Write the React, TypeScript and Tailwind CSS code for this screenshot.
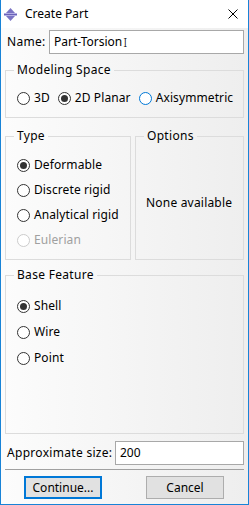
import React, { useState } from "react";

const font = { fontFamily: '"Noto Sans", "Liberation Sans", sans-serif' };

type RadioProps = {
  label: string;
  checked?: boolean;
  disabled?: boolean;
  focus?: boolean;
  onClick?: () => void;
};

const Radio = ({ label, checked, disabled, focus, onClick }: RadioProps) => (
  <button
    onClick={onClick}
    disabled={disabled}
    className="flex items-center gap-[4px] h-[16px] bg-transparent p-0 cursor-default"
  >
    <span
      className={`w-[13px] h-[13px] rounded-full border bg-white flex items-center justify-center shrink-0 ${
        disabled ? "border-[#cccccc]" : focus ? "border-[#0078d7]" : "border-[#333333]"
      }`}
    >
      {checked && <span className="w-[7px] h-[7px] rounded-full bg-[#333333]" />}
    </span>
    <span className={`text-[12px] leading-[16px] tracking-[0.1px] ${disabled ? "text-[#a0a0a0]" : "text-black"}`}>
      {label}
    </span>
  </button>
);

// Win-style group box
const Group = ({
  title,
  className,
  children,
}: {
  title: string;
  className?: string;
  children: React.ReactNode;
}) => (
  <fieldset className={`border border-[#dcdcdc] m-0 p-0 min-w-0 ${className ?? ""}`}>
    <legend className="ml-[8px] px-[3px] text-[12px] leading-[16px] tracking-[0.3px] text-black">{title}</legend>
    {children}
  </fieldset>
);

export default function App() {
  const [space, setSpace] = useState("2D Planar");
  const [type, setType] = useState("Deformable");
  const [feature, setFeature] = useState("Shell");

  return (
    <div
      style={font}
      className="w-[249px] h-[505px] border border-t-0 border-[#1883d7] flex flex-col bg-gradient-to-r from-[#fcfcfc] to-[#eeeeee] select-none"
    >
      {/* Title bar */}
      <div className="h-[28px] bg-white flex items-center pl-[3px] pr-[10px] shrink-0">
        <svg width="13" height="13" viewBox="0 0 13 13" className="mt-[1px]">
          <path d="M6.5 0 L11 5 L2 5 Z" fill="#7b74c4" />
          <path d="M6.5 13 L11 8 L2 8 Z" fill="#7b74c4" />
          <rect x="0" y="5" width="13" height="3" fill="#b3aee3" />
          <rect x="0" y="6" width="13" height="1" fill="#6a63b8" />
        </svg>
        <span className="ml-[8px] text-[12px] text-black">Create Part</span>
        <svg width="10" height="10" viewBox="0 0 10 10" className="ml-auto">
          <path d="M0.5 0.5 L9.5 9.5 M9.5 0.5 L0.5 9.5" stroke="#000" strokeWidth="1" />
        </svg>
      </div>

      <div className="flex-1 flex flex-col px-[4px] pt-[2px] pb-[5px]">
        {/* Name */}
        <div className="flex items-center h-[24px]">
          <span className="ml-[2px] text-[12px] text-black w-[42px] tracking-[0.3px]">Name:</span>
          <div className="flex-1 h-[24px] border border-[#a8a8a8] bg-white flex items-center pl-[4px] text-[12px] text-black">
            Part-Torsion
            <span className="ml-[1px] text-[13px] leading-none font-light">I</span>
          </div>
        </div>

        {/* Modeling Space */}
        <Group title="Modeling Space" className="mt-[8px]">
          <div className="flex items-center gap-[8px] pl-[11px] pt-[12px] pb-[11px]">
            {["3D", "2D Planar", "Axisymmetric"].map((s) => (
              <Radio
                key={s}
                label={s}
                checked={space === s}
                focus={s === "Axisymmetric"}
                onClick={() => setSpace(s)}
              />
            ))}
          </div>
        </Group>

        {/* Type / Options */}
        <div className="flex gap-[4px] mt-[10px]">
          <Group title="Type" className="w-[126px]">
            <div className="flex flex-col gap-[9px] pl-[11px] pt-[13px] pb-[11px]">
              {["Deformable", "Discrete rigid", "Analytical rigid"].map((t) => (
                <Radio key={t} label={t} checked={type === t} onClick={() => setType(t)} />
              ))}
              <Radio label="Eulerian" disabled />
            </div>
          </Group>
          <Group title="Options" className="flex-1 flex">
            <div className="h-full flex items-center pl-[10px] pt-[2px] text-[12px] text-black tracking-[0.2px]">
              None available
            </div>
          </Group>
        </div>

        {/* Base Feature */}
        <Group title="Base Feature" className="mt-[7px] flex-1">
          <div className="flex flex-col gap-[10px] pl-[11px] pt-[15px]">
            {["Shell", "Wire", "Point"].map((f) => (
              <Radio key={f} label={f} checked={feature === f} onClick={() => setFeature(f)} />
            ))}
          </div>
        </Group>

        {/* Approximate size */}
        <div className="flex items-center mt-[7px] h-[24px]">
          <span className="ml-[2px] text-[12px] text-black w-[108px] tracking-[0.3px]">Approximate size:</span>
          <div className="flex-1 h-[24px] border border-[#a8a8a8] bg-white flex items-center pl-[4px] text-[12px] text-black">
            200
          </div>
        </div>

        <div className="h-px bg-[#a0a0a0] mt-[4px]" />

        {/* Buttons */}
        <div className="flex justify-between pl-[19px] pr-[20px] mt-[6px]">
          <button className="w-[78px] h-[23px] border-2 border-[#0078d7] bg-[#e1e1e1] text-[12px] text-black">
            Continue...
          </button>
          <button className="w-[78px] h-[23px] border border-[#adadad] bg-[#e1e1e1] text-[12px] text-black">
            Cancel
          </button>
        </div>
      </div>
    </div>
  );
}
